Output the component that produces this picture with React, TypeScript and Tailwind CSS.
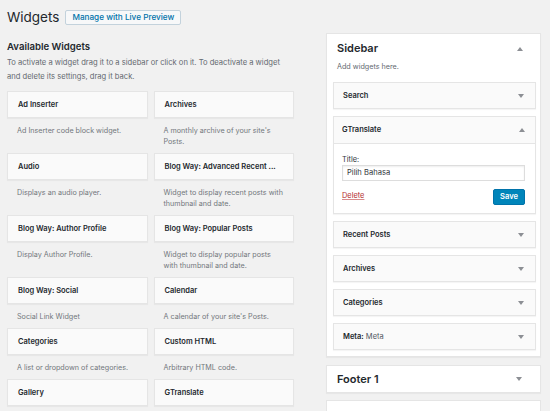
import { ReactNode } from 'react'

interface WidgetItem {
    title: string
    desc: string
}

const available: WidgetItem[] = [
    { title: 'Ad Inserter', desc: 'Ad Inserter code block widget.' },
    { title: 'Archives', desc: "A monthly archive of your site's Posts." },
    { title: 'Audio', desc: 'Displays an audio player.' },
    { title: 'Blog Way: Advanced Recent ...', desc: 'Widget to display recent posts with thumbnail and date.' },
    { title: 'Blog Way: Author Profile', desc: 'Display Author Profile.' },
    { title: 'Blog Way: Popular Posts', desc: 'Widget to display popular posts with thumbnail and date.' },
    { title: 'Blog Way: Social', desc: 'Social Link Widget' },
    { title: 'Calendar', desc: "A calendar of your site's Posts." },
    { title: 'Categories', desc: 'A list or dropdown of categories.' },
    { title: 'Custom HTML', desc: 'Arbitrary HTML code.' },
    { title: 'Gallery', desc: '' },
    { title: 'GTranslate', desc: '' },
]

const Arrow = ({ up = false }: { up?: boolean }) => (
    <svg width="6" height="4" viewBox="0 0 6 4" className="shrink-0">
        <path d={up ? 'M0 4 L3 0 L6 4 Z' : 'M0 0 L6 0 L3 4 Z'} fill="#8c8f94" />
    </svg>
)

const SidebarWidget = ({ children }: { children: ReactNode }) => (
    <div className="h-[27px] flex items-center justify-between pl-[9px] pr-[11px] bg-[#fafafa] border border-[#e5e5e5] shadow-[0_1px_1px_rgba(0,0,0,0.04)] text-[7.5px] font-semibold text-[#23282d]">
        <span>{children}</span>
        <Arrow />
    </div>
)

export default function App() {
    return (
        <div className="h-[411px] overflow-hidden bg-[#f1f1f1] font-['Inter',sans-serif] text-[#23282d] flex pl-[7px]">
            {/* available widgets */}
            <div className="w-[287px] shrink-0">
                <div className="flex items-center gap-[6px] mt-[9px] h-[16px]">
                    <h1 className="text-[13.5px] leading-[16px] font-normal text-[#23282d]">Widgets</h1>
                    <span className="h-[15px] px-[6px] flex items-center border border-[#c3d2dc] bg-[#f7f8f9] rounded-[2px] text-[8.2px] font-medium text-[#0073aa]">
                        Manage with Live Preview
                    </span>
                </div>

                <h2 className="mt-[16px] text-[9.6px] leading-[12px] font-semibold">Available Widgets</h2>
                <p className="mt-[3px] text-[7.6px] leading-[14px] text-[#646970]">
                    To activate a widget drag it to a sidebar or click on it. To deactivate a widget and delete its settings, drag it back.
                </p>

                <div className="mt-[7px] grid grid-cols-2 gap-x-[6px]">
                    {available.map(w => (
                        <div key={w.title}>
                            <div className="h-[27px] flex items-center px-[10px] bg-[#fafafa] border border-[#e5e5e5] shadow-[0_1px_1px_rgba(0,0,0,0.04)] text-[7.5px] font-semibold whitespace-nowrap overflow-hidden">
                                {w.title}
                            </div>
                            <div className="px-[10px] pt-[7px] pb-[6px] text-[7.2px] leading-[11px] text-[#72777c] min-h-[24px]">
                                {w.desc}
                            </div>
                        </div>
                    ))}
                </div>
            </div>

            {/* sidebars */}
            <div className="ml-[32px] w-[215px] shrink-0 pt-[33px]">
                <div className="bg-white border border-[#e5e5e5] shadow-[0_1px_1px_rgba(0,0,0,0.04)] pl-[6px] pr-[4px] pb-[6px]">
                    <div className="flex items-center justify-between pl-[4px] pr-[13px] pt-[7px]">
                        <h2 className="text-[11px] leading-[15px] font-semibold">Sidebar</h2>
                        <Arrow up />
                    </div>
                    <p className="pl-[4px] mt-[5px] text-[7.2px] leading-[11px] text-[#646970]">Add widgets here.</p>

                    <div className="mt-[10px] flex flex-col gap-[7px]">
                        <SidebarWidget>Search</SidebarWidget>

                        <div className="border border-[#e5e5e5] shadow-[0_1px_1px_rgba(0,0,0,0.04)]">
                            <div className="h-[26px] flex items-center justify-between pl-[8px] pr-[10px] bg-[#fafafa] text-[7.5px] font-semibold">
                                <span>GTranslate</span>
                                <Arrow up />
                            </div>
                            <div className="bg-white border-t border-[#e5e5e5] pl-[8px] pr-[10px] pt-[10px] pb-[8px]">
                                <label className="block text-[7.4px] leading-[11px] text-[#32373c]">Title:</label>
                                <div className="h-[16px] flex items-center px-[4px] border border-[#dddddd] shadow-[inset_0_1px_2px_rgba(0,0,0,0.07)] text-[7.6px] text-[#32373c]">
                                    Pilih Bahasa
                                </div>
                                <div className="mt-[8px] flex items-start justify-between">
                                    <span className="mt-[1px] text-[7.4px] leading-[11px] text-[#b32d2e] underline decoration-[#d98c8c]">Delete</span>
                                    <span className="h-[16px] w-[32px] flex items-center justify-center bg-[#0085ba] border border-[#0073aa] rounded-[2px] text-[7.6px] font-semibold text-white">
                                        Save
                                    </span>
                                </div>
                            </div>
                        </div>

                        <SidebarWidget>Recent Posts</SidebarWidget>
                        <SidebarWidget>Archives</SidebarWidget>
                        <SidebarWidget>Categories</SidebarWidget>
                        <SidebarWidget>
                            Meta:<span className="font-normal text-[#50575e]"> Meta</span>
                        </SidebarWidget>
                    </div>
                </div>

                <div className="mt-[8px] h-[28px] flex items-center justify-between pl-[10px] pr-[18px] bg-white border border-[#e5e5e5] shadow-[0_1px_1px_rgba(0,0,0,0.04)]">
                    <h2 className="text-[11px] font-semibold">Footer 1</h2>
                    <Arrow />
                </div>

                <div className="mt-[7px] h-[28px] bg-white border border-[#e5e5e5]" />
            </div>
        </div>
    )
}
